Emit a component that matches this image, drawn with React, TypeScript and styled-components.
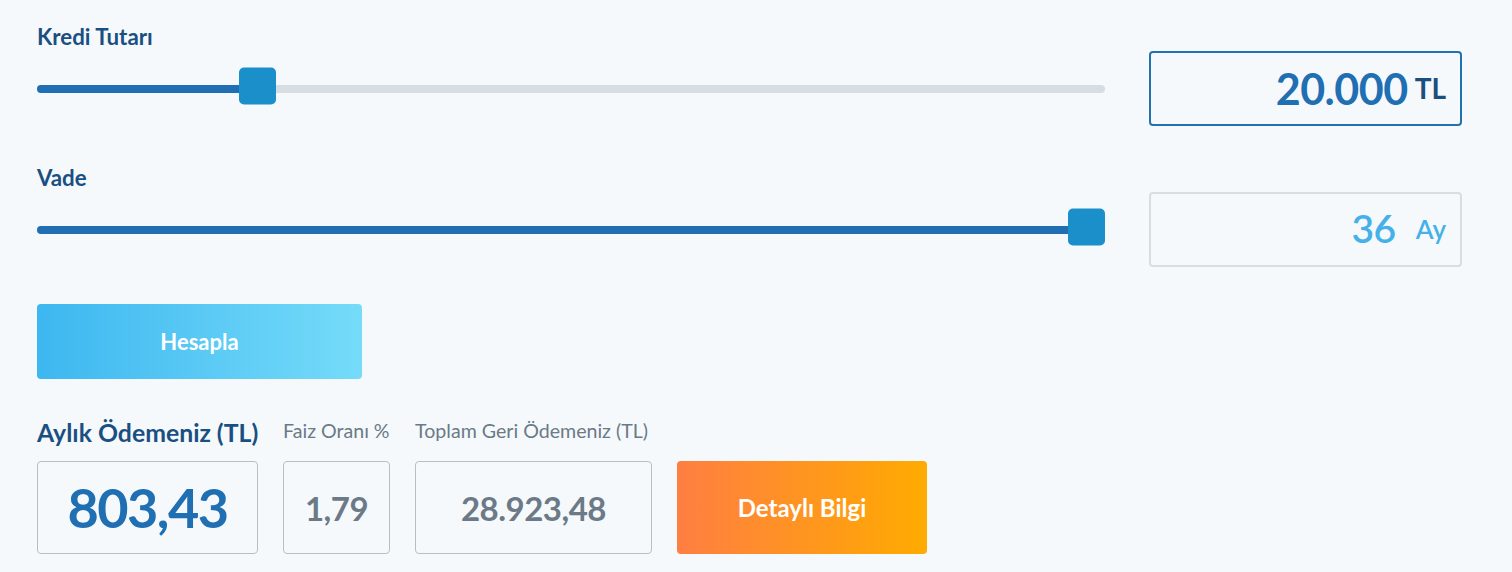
import React from 'react';
import styled, { createGlobalStyle } from 'styled-components';

const GlobalStyle = createGlobalStyle`
  body {
    margin: 0;
    background: #f5f9fc;
    font-family: Lato, "Noto Sans", "Liberation Sans", sans-serif;
  }
`;

const THUMB = 37;

type SliderProps = { value: number; min: number; max: number };

const RangeSlider = ({ value, min, max }: SliderProps) => {
  const p = (value - min) / (max - min);
  const left = `calc(${p} * (100% - ${THUMB}px))`;
  return (
    <SliderWrap>
      <Track>
        <Fill style={{ width: `calc(${left} + ${THUMB / 2}px)` }} />
      </Track>
      <Thumb style={{ left }} />
    </SliderWrap>
  );
};

const App = () => {
  return (
    <>
      <GlobalStyle />
      <Page>
        <Field>
          <FieldLabel>Kredi Tutarı</FieldLabel>
          <FieldRow>
            <RangeSlider value={20000} min={500} max={100000} />
            <ValueBox $active>
              <Amount $active>20.000</Amount>
              <Unit $active $gap={7}>TL</Unit>
            </ValueBox>
          </FieldRow>
        </Field>

        <Field $top={39}>
          <FieldLabel>Vade</FieldLabel>
          <FieldRow>
            <RangeSlider value={36} min={3} max={36} />
            <ValueBox>
              <Amount>36</Amount>
              <Unit $gap={20}>Ay</Unit>
            </ValueBox>
          </FieldRow>
        </Field>

        <CalcButton>Hesapla</CalcButton>

        <Results>
          <ResultCol $width={221}>
            <ResultTitle $main>Aylık Ödemeniz (TL)</ResultTitle>
            <ResultBox>
              <ResultValue $main>803,43</ResultValue>
            </ResultBox>
          </ResultCol>
          <ResultCol $width={107}>
            <ResultTitle>Faiz Oranı %</ResultTitle>
            <ResultBox>
              <ResultValue>1,79</ResultValue>
            </ResultBox>
          </ResultCol>
          <ResultCol $width={237}>
            <ResultTitle>Toplam Geri Ödemeniz (TL)</ResultTitle>
            <ResultBox>
              <ResultValue>28.923,48</ResultValue>
            </ResultBox>
          </ResultCol>
          <DetailButton>Detaylı Bilgi</DetailButton>
        </Results>
      </Page>
    </>
  );
};

const Page = styled.div`
  box-sizing: border-box;
  width: 1512px;
  padding: 24px 50px 0 37px;
  display: flex;
  flex-direction: column;
`;

const Field = styled.section<{ $top?: number }>`
  display: flex;
  flex-direction: column;
  margin-top: ${(p) => p.$top ?? 0}px;
`;

const FieldLabel = styled.label`
  font-size: 22.3px;
  line-height: 26px;
  font-weight: 700;
  color: #1a4f82;
  margin-bottom: 1px;
`;

const FieldRow = styled.div`
  display: flex;
  align-items: center;
  gap: 44px;
`;

const SliderWrap = styled.div`
  flex: 1;
  position: relative;
  height: 40px;
  display: flex;
  align-items: center;
`;

const Track = styled.div`
  position: relative;
  width: 100%;
  height: 8px;
  border-radius: 4px;
  background: #d6dee3;
  overflow: hidden;
`;

const Fill = styled.div`
  position: absolute;
  left: 0;
  top: 0;
  bottom: 0;
  background: #1f6fb2;
`;

const Thumb = styled.div`
  position: absolute;
  top: calc(50% - 3px);
  transform: translateY(-50%);
  width: ${THUMB}px;
  height: ${THUMB}px;
  border-radius: 5px;
  background: #1a8fc9;
`;

const ValueBox = styled.div<{ $active?: boolean }>`
  box-sizing: border-box;
  width: 313px;
  height: 75px;
  border: 2px solid ${(p) => (p.$active ? '#2372b0' : '#d8dde1')};
  border-radius: 4px;
  display: flex;
  align-items: center;
  justify-content: flex-end;
  padding-right: 14px;
`;

const Amount = styled.span<{ $active?: boolean }>`
  font-size: ${(p) => (p.$active ? 43 : 39)}px;
  font-weight: ${(p) => (p.$active ? 700 : 600)};
  color: ${(p) => (p.$active ? '#1f6fb2' : '#45b1e8')};
  letter-spacing: -0.5px;
  margin-top: ${(p) => (p.$active ? 0 : -3)}px;
`;

const Unit = styled.span<{ $active?: boolean; $gap: number }>`
  margin-left: ${(p) => p.$gap}px;
  font-size: ${(p) => (p.$active ? 28 : 26)}px;
  font-weight: ${(p) => (p.$active ? 700 : 600)};
  color: ${(p) => (p.$active ? '#1b4f80' : '#45b1e8')};
  margin-top: ${(p) => (p.$active ? -2 : -1)}px;
`;

const CalcButton = styled.button`
  margin-top: 37px;
  width: 325px;
  height: 75px;
  border: none;
  border-radius: 4px;
  background: linear-gradient(90deg, #3db7f0 0%, #75dbf9 100%);
  color: #fff;
  font-family: inherit;
  font-size: 22px;
  font-weight: 700;
  cursor: pointer;
`;

const Results = styled.div`
  margin-top: 39px;
  display: flex;
  align-items: flex-end;
  gap: 25px;
`;

const ResultCol = styled.div<{ $width: number }>`
  width: ${(p) => p.$width}px;
  display: flex;
  flex-direction: column;
`;

const ResultTitle = styled.div<{ $main?: boolean }>`
  font-size: ${(p) => (p.$main ? 24.8 : 19.6)}px;
  line-height: ${(p) => (p.$main ? 30 : 24)}px;
  font-weight: ${(p) => (p.$main ? 700 : 400)};
  color: ${(p) => (p.$main ? '#1a4f82' : '#6b7a86')};
  margin-bottom: ${(p) => (p.$main ? 13 : 18)}px;
  white-space: nowrap;
`;

const ResultBox = styled.div`
  box-sizing: border-box;
  height: 93px;
  border: 1px solid #b8bec4;
  border-radius: 4px;
  display: flex;
  align-items: center;
  justify-content: center;
`;

const ResultValue = styled.span<{ $main?: boolean }>`
  font-size: ${(p) => (p.$main ? 54 : 33)}px;
  font-weight: 700;
  color: ${(p) => (p.$main ? '#1f6fb2' : '#6b7a86')};
  letter-spacing: ${(p) => (p.$main ? -1.5 : -0.5)}px;
`;

const DetailButton = styled.button`
  width: 250px;
  height: 93px;
  border: none;
  border-radius: 4px;
  background: linear-gradient(90deg, #ff7e42 0%, #ffab00 100%);
  color: #fff;
  font-family: inherit;
  font-size: 24px;
  font-weight: 700;
  cursor: pointer;
`;

export default App;
